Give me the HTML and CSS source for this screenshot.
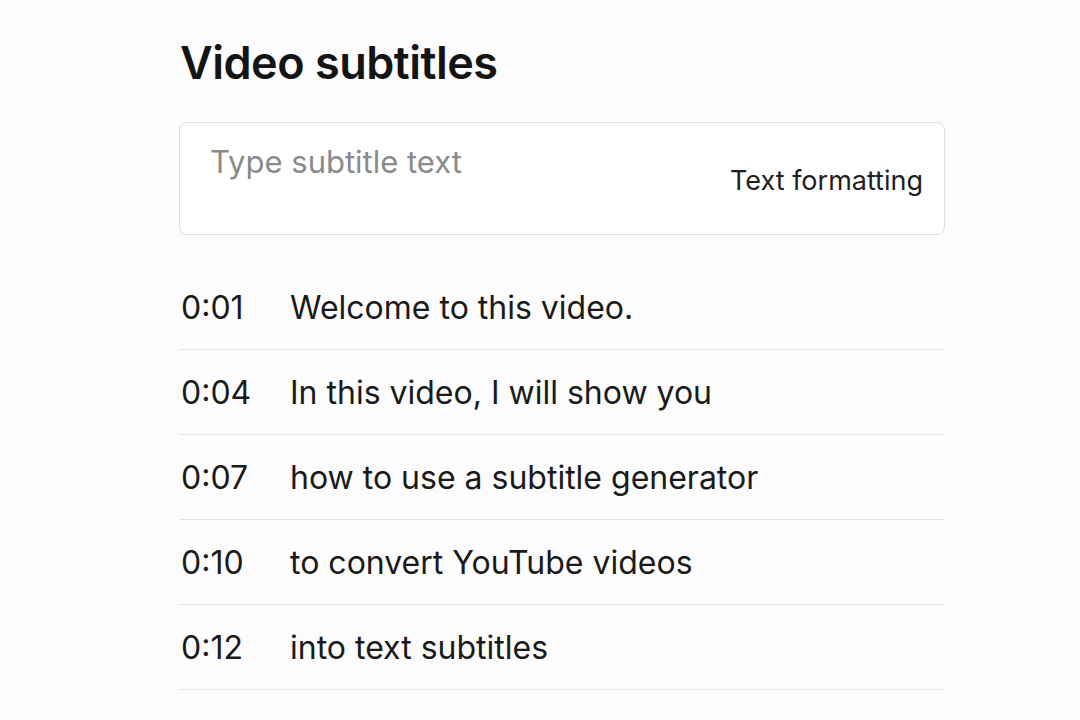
FILE: index.html
```html
<!DOCTYPE html>
<html>
<head>
<meta charset="utf-8">
<link rel="stylesheet" href="styles.css">
</head>
<body>
<main class="page">
  <h1 class="title">Video subtitles</h1>
  <div class="editor">
    <div class="placeholder">Type subtitle text</div>
    <div class="formatting">Text formatting</div>
  </div>
  <ul class="list">
    <li class="row"><span class="time">0:01</span><span class="text">Welcome to this video.</span></li>
    <li class="row"><span class="time">0:04</span><span class="text">In this video, I will show you</span></li>
    <li class="row"><span class="time">0:07</span><span class="text">how to use a subtitle generator</span></li>
    <li class="row"><span class="time">0:10</span><span class="text">to convert YouTube videos</span></li>
    <li class="row"><span class="time">0:12</span><span class="text">into text subtitles</span></li>
  </ul>
</main>
</body>
</html>
```
FILE: styles.css
```css
html, body {
  margin: 0;
  padding: 0;
  background: #fcfcfc;
  font-family: Inter, "Noto Sans", sans-serif;
  color: #1a1a1a;
}
.page {
  width: 766px;
  margin-left: 179px;
  padding-top: 36px;
}
.title {
  margin: 0 0 0 1px;
  font-size: 45px;
  font-weight: 600;
  line-height: 54px;
  letter-spacing: -0.5px;
  color: #141414;
}
.editor {
  margin-top: 32px;
  height: 113px;
  border: 1px solid #dedede;
  border-radius: 8px;
  background: #ffffff;
  box-sizing: border-box;
  display: flex;
  justify-content: space-between;
  padding: 21px 21px 0 30px;
}
.placeholder {
  font-size: 31px;
  line-height: 36px;
  color: #8a8a8a;
}
.formatting {
  margin-top: 19px;
  font-size: 27px;
  line-height: 36px;
  color: #1e1e1e;
}
.list {
  list-style: none;
  margin: 30px 0 0;
  padding: 0;
}
.row {
  display: flex;
  align-items: center;
  height: 84px;
  border-bottom: 1px solid #e6e6e6;
  font-size: 32px;
  color: #1a1a1a;
}
.time {
  width: 111px;
  padding-left: 2px;
  box-sizing: border-box;
}
```
